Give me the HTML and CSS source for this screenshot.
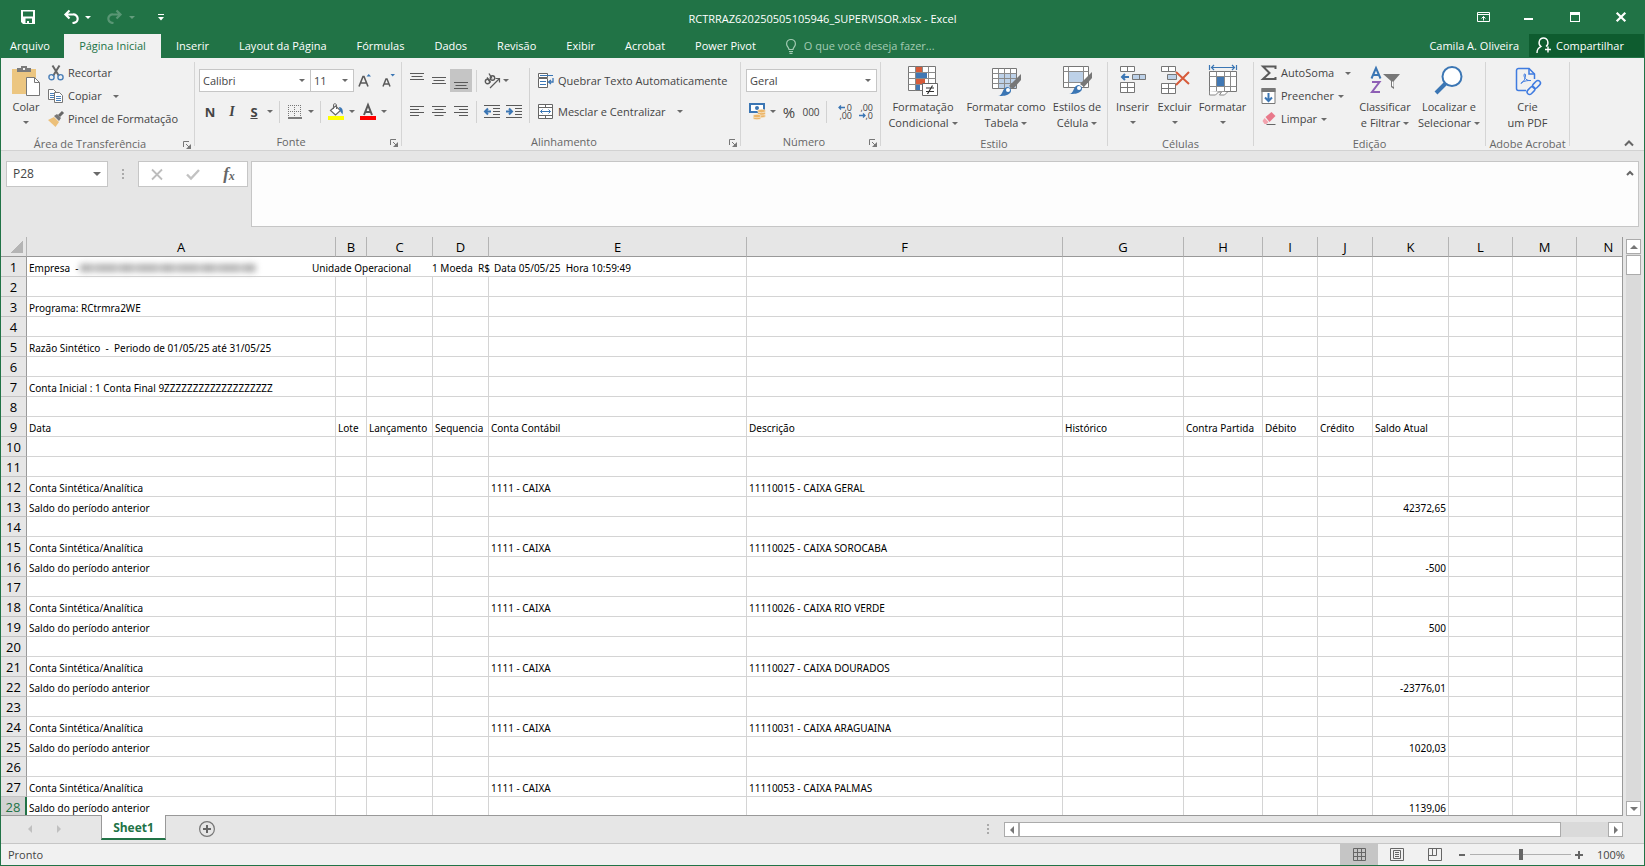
FILE: index.html
```html
<!DOCTYPE html>
<html lang="pt-BR">
<head>
<meta charset="utf-8">
<title>RCTRRAZ620250505105946_SUPERVISOR.xlsx - Excel</title>
<link rel="stylesheet" href="styles.css">
</head>
<body>
<header class="titlebar">
  <div class="quick">
    <button class="q-btn" aria-label="Salvar"><svg width="14" height="14" viewBox="0 0 14 14"><path d="M0 0h14v14H2L0 12zM2 1.500v5h10v-5zM3 8.500V13h1.500V8.500zM4.500 8.500H3V13h3v-2h2v2h3V8.500z" fill="#fff" fill-rule="evenodd"/></svg></button>
    <button class="q-btn" aria-label="Desfazer"><svg width="15" height="14" viewBox="0 0 15 14"><path d="M1 4.500h8a4 4 0 0 1 1 8.300L8.500 13M5.500 0.500L1.500 4.500l4 4" fill="none" stroke="#fff" stroke-width="2.200"/></svg></button>
    <i class="caret white"></i>
    <button class="q-btn redo" aria-label="Refazer"><svg width="15" height="14" viewBox="0 0 15 14"><path d="M14 4.500H6a4 4 0 0 0-1 8.300L6.500 13M9.500 0.500l4 4-4 4" fill="none" stroke="#fff" stroke-width="2.200"/></svg></button>
    <i class="caret white dim"></i>
    <button class="q-btn custom" aria-label="Personalizar"><svg width="6" height="7" viewBox="0 0 6 7"><path d="M0 0h6v1H0zM0 3h6L3 6.500z" fill="#fff"/></svg></button>
  </div>
  <h1 class="doc-title">RCTRRAZ620250505105946_SUPERVISOR.xlsx - Excel</h1>
  <div class="win">
    <button aria-label="Opções da faixa"><svg width="13" height="10" viewBox="0 0 13 10"><path d="M.5.500h12v9H.5zM1 2.500h11M6.500 8.500V4.500M4.500 6.500l2-2 2 2" fill="none" stroke="#fff"/></svg></button>
    <button aria-label="Minimizar"><svg width="10" height="10" viewBox="0 0 10 10"><path d="M0 6h9v2H0z" fill="#fff"/></svg></button>
    <button aria-label="Maximizar"><svg width="10" height="10" viewBox="0 0 10 10"><path d="M0 0h10v10H0zM1 3v6h8V3z" fill="#fff" fill-rule="evenodd"/></svg></button>
    <button aria-label="Fechar"><svg width="10" height="10" viewBox="0 0 10 10"><path d="M.7.700l8.600 8.600M9.300.700L.7 9.300" stroke="#fff" stroke-width="2.200"/></svg></button>
  </div>
</header>
<nav class="tabs">
  <button class="tab file">Arquivo</button>
  <button class="tab active">Página Inicial</button>
  <button class="tab">Inserir</button>
  <button class="tab">Layout da Página</button>
  <button class="tab">Fórmulas</button>
  <button class="tab">Dados</button>
  <button class="tab">Revisão</button>
  <button class="tab">Exibir</button>
  <button class="tab">Acrobat</button>
  <button class="tab">Power Pivot</button>
  <button class="tab tell"><svg width="10" height="15" viewBox="0 0 10 15"><path d="M3 10.500C3 8.500.6 7.500.6 4.900a4.400 4.400 0 0 1 8.800 0C9.400 7.500 7 8.500 7 10.500zM3 12.500h4M3.500 14.400h3" fill="none" stroke="#a3cbb3" stroke-width="1.200"/></svg>O que você deseja fazer...</button>
  <span class="user">Camila A. Oliveira</span>
  <button class="share"><svg width="16" height="17" viewBox="0 0 16 17"><path d="M1 16c0-4 1.500-5 4-6.500C1.500 7 3 1 7.500 1s6 6 2.500 8.500M9 12.500h6M12 9.500v6" fill="none" stroke="#fff" stroke-width="1.400"/></svg>Compartilhar</button>
</nav>

<section class="ribbon">
  <div class="group g-clip">
    <div class="g-body">
      <button class="big paste"><svg width="32" height="32" viewBox="0 0 32 32"><path d="M2 4h24v25H2z" fill="#ecc681"/><path d="M7 7V3h4V1h6v2h4v4z" fill="#7b7b7b"/><path d="M13 3h2v2h-2z" fill="#f1f1f1"/><path d="M16.500 12.500h8l5 5v13h-13z" fill="#fff" stroke="#777"/><path d="M24.500 12.500v5h5" fill="none" stroke="#777"/></svg><span>Colar</span><i class="caret"></i></button>
      <div class="stack">
        <button class="small"><svg width="16" height="16" viewBox="0 0 16 16"><path d="M4.500.500L11 11M11.500.500L5 11" stroke="#666" stroke-width="2"/><circle cx="3.500" cy="12.200" r="2.600" fill="none" stroke="#4a7fb8" stroke-width="1.400"/><circle cx="12.500" cy="12.200" r="2.600" fill="none" stroke="#4a7fb8" stroke-width="1.400"/></svg>Recortar</button>
        <button class="small"><svg width="16" height="16" viewBox="0 0 16 16"><path d="M.5 1.500h5l3 3v7h-8z" fill="#fff" stroke="#777"/><path d="M2 5.500h4M2 7.500h4M2 9.500h4" stroke="#4a7fb8"/><path d="M6.500 4.500h5l3 3v7h-8z" fill="#fff" stroke="#777"/><path d="M8 8.500h5M8 10.500h5M8 12.500h5" stroke="#4a7fb8"/></svg>Copiar<i class="caret far"></i></button>
        <button class="small"><svg width="16" height="16" viewBox="0 0 16 16"><path d="M0 9l6-3 5 5-3.500 5z" fill="#ecc07a"/><path d="M6 5l3-2 4 4-2 3z" fill="#777"/><path d="M11 5l4-4" stroke="#666" stroke-width="3"/></svg>Pincel de Formatação</button>
      </div>
    </div>
    <div class="g-label">Área de Transferência<button class="launch" aria-label="Mais opções"><svg width="8" height="8" viewBox="0 0 8 8"><path d="M.5 6V.500H6M3 3l3 3" fill="none" stroke="#777"/><path d="M8 3v5H3z" fill="#777"/></svg></button></div>
  </div>

  <div class="group g-font">
    <div class="g-body rows">
      <div class="row">
        <label class="combo font-name"><select aria-label="Fonte"><option>Calibri</option></select><i class="caret"></i></label>
        <label class="combo font-size"><select aria-label="Tamanho"><option>11</option></select><i class="caret"></i></label>
        <button class="ic grow" aria-label="Aumentar fonte"><svg width="15" height="16" viewBox="0 0 15 16"><path d="M1 13.500L5 3.500h1l4 10M2.500 10h6" fill="none" stroke="#5a5a5a" stroke-width="1.600"/><path d="M8.500 3.500h4.500L10.700 1z" fill="#3b76b4"/></svg></button>
        <button class="ic grow" aria-label="Diminuir fonte"><svg width="15" height="16" viewBox="0 0 15 16"><path d="M2 13.500L5 6h1l3 7.500M3 11h5" fill="none" stroke="#5a5a5a" stroke-width="1.500"/><path d="M9.500 1h4.500l-2.300 2.500z" fill="#3b76b4"/></svg></button>
      </div>
      <div class="row">
        <button class="ic letter bold">N</button>
        <button class="ic letter ital">I</button>
        <button class="ic letter under">S</button><i class="caret"></i>
        <i class="sep"></i>
        <button class="ic" aria-label="Bordas"><svg width="14" height="14" viewBox="0 0 14 14"><path d="M0 .5h14M0 6.500h14M.5 0v12M6.500 0v12M12.500 0v12" stroke="#777" stroke-dasharray="1 1" fill="none"/><path d="M0 13h14" stroke="#555" stroke-width="1.500"/></svg></button><i class="caret"></i>
        <i class="sep"></i>
        <button class="ic" aria-label="Cor de preenchimento"><svg width="16" height="17" viewBox="0 0 16 17"><path d="M2.500 7.500L7.500 3l5 4.500-5 4.500z" fill="#fff" stroke="#666" stroke-width="1.200"/><path d="M5.500 6V1.500C5.500.500 8.500.500 8.500 2v4" fill="none" stroke="#666"/><path d="M11 4c3 0 4.500 3 3.500 7.500L12 8z" fill="#3b76b4"/><path d="M0 13h16v4H0z" fill="#ffff00"/></svg></button><i class="caret"></i>
        <button class="ic" aria-label="Cor da fonte"><svg width="16" height="17" viewBox="0 0 16 17"><path d="M4 12L8 2l4 10M5.500 9h5" fill="none" stroke="#5a5a5a" stroke-width="2"/><path d="M0 13h16v4H0z" fill="#f00"/></svg></button><i class="caret"></i>
      </div>
    </div>
    <div class="g-label">Fonte<button class="launch" aria-label="Mais opções"><svg width="8" height="8" viewBox="0 0 8 8"><path d="M.5 6V.500H6M3 3l3 3" fill="none" stroke="#777"/><path d="M8 3v5H3z" fill="#777"/></svg></button></div>
  </div>

  <div class="group g-align">
    <div class="g-body">
      <div class="rows">
        <div class="row">
          <button class="ic" aria-label="Em cima"><svg width="14" height="24" viewBox="0 0 14 24"><path d="M0 4.500h14M1.500 7.500h11M0 10.500h14" stroke="#5a5a5a"/></svg></button>
          <button class="ic" aria-label="No meio"><svg width="14" height="24" viewBox="0 0 14 24"><path d="M0 8.500h14M1.500 11.500h11M0 14.500h14" stroke="#5a5a5a"/></svg></button>
          <button class="ic on" aria-label="Embaixo"><svg width="14" height="24" viewBox="0 0 14 24"><path d="M0 13.500h14M1.500 16.500h11M0 19.500h14" stroke="#5a5a5a"/></svg></button>
          <i class="sep"></i>
          <button class="ic" aria-label="Orientação"><svg width="17" height="16" viewBox="0 0 17 16"><g fill="none" stroke="#5a5a5a" stroke-width="1.400"><circle cx="3.500" cy="8.500" r="2.200"/><path d="M3 4.500l3.500 5"/><circle cx="8.500" cy="5" r="2.200"/><path d="M5 .500l3 5"/><path d="M6 15L15.500 5.500M11.500 5.500h4v4" stroke-width="1.200"/></g></svg></button><i class="caret"></i>
        </div>
        <div class="row">
          <button class="ic" aria-label="Esquerda"><svg width="14" height="12" viewBox="0 0 14 12"><path d="M0 .5h14M0 3.500h9M0 6.500h14M0 9.500h9" stroke="#5a5a5a"/></svg></button>
          <button class="ic" aria-label="Centro"><svg width="14" height="12" viewBox="0 0 14 12"><path d="M0 .5h14M2.500 3.500h9M0 6.500h14M2.500 9.500h9" stroke="#5a5a5a"/></svg></button>
          <button class="ic" aria-label="Direita"><svg width="14" height="12" viewBox="0 0 14 12"><path d="M0 .5h14M5 3.500h9M0 6.500h14M5 9.500h9" stroke="#5a5a5a"/></svg></button>
          <i class="sep"></i>
          <button class="ic" aria-label="Diminuir recuo"><svg width="16" height="13" viewBox="0 0 16 13"><path d="M0 .5h16M9 3.500h7M9 6.500h7M9 9.500h7M0 12.500h16" stroke="#5a5a5a"/><path d="M1 6.500h6M4 3.500l-3 3 3 3" fill="none" stroke="#3b76b4" stroke-width="2"/></svg></button>
          <button class="ic" aria-label="Aumentar recuo"><svg width="16" height="13" viewBox="0 0 16 13"><path d="M0 .5h16M9 3.500h7M9 6.500h7M9 9.500h7M0 12.500h16" stroke="#5a5a5a"/><path d="M0 6.500h6M3 3.500l3 3-3 3" fill="none" stroke="#3b76b4" stroke-width="2"/></svg></button>
        </div>
      </div>
      <i class="sep tall"></i>
      <div class="rows wide">
        <div class="row"><button class="small"><svg width="16" height="16" viewBox="0 0 16 16"><path d="M.5.500h9v4h-9zM.5 5.500h9v9h-9z" fill="#fff" stroke="#666"/><path d="M2 2.500h13M2 8.500h6M2 11.500h6" stroke="#3b76b4"/><path d="M15 5v4h-4M13 7l-2.500 2 2.500 2" fill="none" stroke="#3b76b4" stroke-width="1.300"/></svg>Quebrar Texto Automaticamente</button></div>
        <div class="row"><button class="small"><svg width="16" height="16" viewBox="0 0 16 16"><path d="M.5.500h14v14H.5zM.5 3.500h14M.5 11.500h14M7.500.500v3M7.500 11.500v3" fill="#fff" stroke="#666"/><path d="M2.500 7.500h10M4.500 5.500l-2 2 2 2M10.500 5.500l2 2-2 2" fill="none" stroke="#3b76b4"/></svg>Mesclar e Centralizar<i class="caret far"></i></button></div>
      </div>
    </div>
    <div class="g-label">Alinhamento<button class="launch" aria-label="Mais opções"><svg width="8" height="8" viewBox="0 0 8 8"><path d="M.5 6V.500H6M3 3l3 3" fill="none" stroke="#777"/><path d="M8 3v5H3z" fill="#777"/></svg></button></div>
  </div>

  <div class="group g-num">
    <div class="g-body rows">
      <div class="row"><label class="combo number"><select aria-label="Formato de número"><option>Geral</option></select><i class="caret"></i></label></div>
      <div class="row">
        <button class="ic" aria-label="Formato de contabilização"><svg width="17" height="17" viewBox="0 0 17 17"><path d="M1 1h14v8H1z" fill="#fff" stroke="#3b76b4" stroke-width="2"/><circle cx="8" cy="5" r="2" fill="#3b76b4"/><g fill="#ecb567" stroke="#f6f0e4" stroke-width=".6"><ellipse cx="12.500" cy="13" rx="4" ry="1.700"/><ellipse cx="12.500" cy="10.500" rx="4" ry="1.700"/><ellipse cx="12.500" cy="8" rx="4" ry="1.700"/><ellipse cx="8" cy="15" rx="4" ry="1.700"/><ellipse cx="8" cy="13" rx="4" ry="1.700"/></g></svg></button><i class="caret"></i>
        <button class="ic pct">%</button>
        <button class="ic thou">000</button>
        <i class="sep"></i>
        <button class="ic dec"><span><svg width="7" height="5" viewBox="0 0 7 5"><path d="M1 2.500h6M3 .5l-2 2 2 2" fill="none" stroke="#3b76b4" stroke-width="1.300"/></svg>,0</span><span>,00</span></button>
        <button class="ic dec"><span>,00</span><span><svg width="7" height="5" viewBox="0 0 7 5"><path d="M0 2.500h6M4 .5l2 2-2 2" fill="none" stroke="#3b76b4" stroke-width="1.300"/></svg>,0</span></button>
      </div>
    </div>
    <div class="g-label">Número<button class="launch" aria-label="Mais opções"><svg width="8" height="8" viewBox="0 0 8 8"><path d="M.5 6V.500H6M3 3l3 3" fill="none" stroke="#777"/><path d="M8 3v5H3z" fill="#777"/></svg></button></div>
  </div>

  <div class="group g-style">
    <div class="g-body">
      <button class="big"><svg width="32" height="32" viewBox="0 0 32 32"><path d="M1.500 1.500h27v24h-27z" fill="#fff" stroke="#777"/><path d="M8.500 1.500v24M15.500 1.500v24M21.500 1.500v24M1.500 7.500h27M1.500 13.500h27M1.500 19.500h27" stroke="#8a8a8a"/><path d="M9 2h6v5H9zM9 14h9v5H9z" fill="#d75b3a"/><path d="M9 8h11v5H9zM9 20h4v5H9z" fill="#4178b4"/><path d="M15.500 18.500h15v12h-15z" fill="#fff" stroke="#666"/><path d="M19 23h8M19 26.500h8M25.500 20.500l-5 8.500" stroke="#333" stroke-width="1.200"/></svg><span>Formatação</span><span>Condicional<i class="caret"></i></span></button>
      <button class="big"><svg width="32" height="32" viewBox="0 0 32 32"><path d="M2.500 3.500h24v20h-24z" fill="#fff" stroke="#777"/><path d="M9 9h17v14H9z" fill="#bdd1e8"/><path d="M8.500 3.500v20M14.500 3.500v20M20.500 3.500v20M2.500 8.500h24M2.500 13.500h24M2.500 18.500h24" stroke="#8a8a8a"/><path d="M31 9v6l-8 9-4-3z" fill="#777"/><path d="M8 31c5 0 4-8 9-9 4 0 5 4 3 6-3 3-7 3-12 3z" fill="#3b76b4"/><circle cx="18" cy="25" r="2" fill="#fff"/></svg><span>Formatar como</span><span>Tabela<i class="caret"></i></span></button>
      <button class="big"><svg width="32" height="32" viewBox="0 0 32 32"><path d="M2.500 1.500h25v21h-25z" fill="#fff" stroke="#777"/><path d="M7.500 1.500v21M22.500 1.500v21M2.500 6.500h25M2.500 17.500h25" stroke="#8a8a8a"/><path d="M8 7h14v10H8z" fill="#bdd1e8"/><path d="M31 7v6l-8 9-4-3z" fill="#777"/><path d="M8 29c5 0 4-8 9-9 4 0 5 4 3 6-3 3-7 3-12 3z" fill="#3b76b4"/><circle cx="18" cy="23" r="2" fill="#fff"/></svg><span>Estilos de</span><span>Célula<i class="caret"></i></span></button>
    </div>
    <div class="g-label">Estilo</div>
  </div>

  <div class="group g-cells">
    <div class="g-body">
      <button class="big"><svg width="30" height="32" viewBox="0 0 30 32"><path d="M2.500 1.500h14v5h-14zM9.500 1.500v5M2.500 17.500h14v10h-14zM9.500 17.500v10M2.500 22.500h14" fill="#fff" stroke="#777"/><path d="M14.500 9.500h13v5h-13zM21.500 9.500v5" fill="#bdd1e8" stroke="#777"/><path d="M4 12h7M7 9l-3 3 3 3" fill="none" stroke="#3b76b4" stroke-width="2"/></svg><span>Inserir</span><i class="caret"></i></button>
      <button class="big"><svg width="32" height="32" viewBox="0 0 32 32"><path d="M2.500 1.500h14v5h-14zM9.500 1.500v5M2.500 18.500h14v10h-14zM9.500 18.500v10M2.500 23.500h14" fill="#fff" stroke="#777"/><path d="M8.500 9.500h9v5h-9z" fill="#bdd1e8" stroke="#777"/><path d="M17 7l13 12M30 7L17 20" stroke="#d75b3a" stroke-width="2"/></svg><span>Excluir</span><i class="caret"></i></button>
      <button class="big"><svg width="30" height="32" viewBox="0 0 30 32"><path d="M1.500 0v5M28.500 0v5M3 2.500h24M6 0L3.500 2.500 6 5M24 0l2.500 2.500L24 5" fill="none" stroke="#3b76b4" stroke-width="1.200"/><path d="M1.500 6.500h27v20h-27z" fill="#fff" stroke="#777"/><path d="M8.500 6.500v20M16.500 6.500v20M22.500 6.500v20M1.500 11.500h27M1.500 21.500h27" stroke="#8a8a8a"/><path d="M9 12h7v9H9z" fill="#4178b4"/><path d="M1.500 26v4h6l3-3h3l-2 3h5l3-3" fill="#fff" stroke="#888"/></svg><span>Formatar</span><i class="caret"></i></button>
    </div>
    <div class="g-label">Células</div>
  </div>

  <div class="group g-edit">
    <div class="g-body">
      <div class="stack">
        <button class="small"><svg width="15" height="16" viewBox="0 0 15 16"><path d="M14 4V1.500H1.500L8 8l-6.500 6H14V12" fill="none" stroke="#5a5a5a" stroke-width="2"/></svg>AutoSoma<i class="caret far"></i></button>
        <button class="small"><svg width="15" height="16" viewBox="0 0 15 16"><path d="M.5.500h13v15H.5z" fill="#fff" stroke="#777"/><path d="M0 0h14v4H0z" fill="#777"/><path d="M7 5v8M3.500 9.500L7 13l3.500-3.500" fill="none" stroke="#3b76b4" stroke-width="2"/></svg>Preencher<i class="caret"></i></button>
        <button class="small"><svg width="15" height="16" viewBox="0 0 15 16"><path d="M4 6l6-5 4 4-6 6z" fill="#e8788a"/><path d="M3 7l4 4-2 2H3l-2-3z" fill="#f3a3ae"/><path d="M5 13.500h9" stroke="#666"/></svg>Limpar<i class="caret"></i></button>
      </div>
      <button class="big"><svg width="32" height="32" viewBox="0 0 32 32"><path d="M2.500 13.500L7 3l4.500 10.500M4 10h6" fill="none" stroke="#3b76b4" stroke-width="2"/><path d="M3 17h7.500L3 27h8" fill="none" stroke="#8e5fb5" stroke-width="2"/><path d="M14 9h17l-6 7v8l-3-2v-6z" fill="#777"/><path d="M23 16.500h1.500V22L23 21z" fill="#fff"/></svg><span>Classificar</span><span>e Filtrar<i class="caret"></i></span></button>
      <button class="big"><svg width="32" height="32" viewBox="0 0 32 32"><path d="M3 28l11-11" stroke="#3b76b4" stroke-width="4"/><circle cx="19" cy="11.500" r="9.500" fill="#fff" stroke="#3b76b4" stroke-width="2"/></svg><span>Localizar e</span><span>Selecionar<i class="caret"></i></span></button>
    </div>
    <div class="g-label">Edição</div>
  </div>

  <div class="group g-pdf">
    <div class="g-body">
      <button class="big"><svg width="28" height="32" viewBox="0 0 28 32"><g fill="none" stroke="#3f7be0" stroke-width="1.500"><path d="M13 25.500H5.500a2 2 0 0 1-2-2v-18a2 2 0 0 1 2-2H16l5.500 5.500v5"/><path d="M16 3.500V9h5.500"/><path d="M8 18.500c3-2 4.500-5 4.500-8.500 0-1.500-1.500-1.500-1.500 0 0 3.500 3 6 7 5.500M8 18.500c-.5-1 4-3 9-3" stroke-width="1"/><rect x="-2.500" y="-4.500" width="5" height="9" rx="2.500" transform="translate(23.500 19.500) rotate(45)"/><rect x="-2.500" y="-4.500" width="5" height="9" rx="2.500" transform="translate(18 25.500) rotate(45)"/></g></svg><span>Crie</span><span>um PDF</span></button>
    </div>
    <div class="g-label">Adobe Acrobat</div>
  </div>
  <button class="collapse" aria-label="Recolher faixa"><svg width="10" height="7" viewBox="0 0 10 7"><path d="M1 5.500l4-4 4 4" fill="none" stroke="#666" stroke-width="2"/></svg></button>
</section>

<section class="formula">
  <label class="namebox"><input aria-label="Caixa de nome" value="P28"><i class="caret"></i></label>
  <i class="dots"></i>
  <div class="fx-box">
    <button aria-label="Cancelar"><svg width="12" height="11" viewBox="0 0 12 11"><path d="M1 .5l10 10M11 .5l-10 10" stroke="#bdbdbd" stroke-width="1.800"/></svg></button>
    <button aria-label="Inserir"><svg width="14" height="11" viewBox="0 0 14 11"><path d="M1 5.500l4 4L13 1" fill="none" stroke="#c2c2c2" stroke-width="2.400"/></svg></button>
    <button class="fx" aria-label="Inserir função">f<small>x</small></button>
  </div>
  <div class="entry"><textarea aria-label="Barra de fórmulas"></textarea><button aria-label="Recolher barra"><svg width="8" height="6" viewBox="0 0 8 6"><path d="M1 5l3-3 3 3" fill="none" stroke="#666" stroke-width="2"/></svg></button></div>
</section>

<main class="workspace">
  <div class="sheet"><table class="grid"><colgroup id="cols"></colgroup><thead><tr id="heads"></tr></thead><tbody id="body"></tbody></table></div>
  <div class="vscroll"><button aria-label="Para cima"><i class="tri up"></i></button><div class="vthumb"></div><div class="track"></div><button aria-label="Para baixo"><i class="tri down"></i></button></div>
</main>

<footer class="sheetbar">
  <div class="nav"><i class="tri left"></i><i class="tri right"></i></div>
  <button class="sheet-tab">Sheet1</button>
  <button class="add" aria-label="Nova planilha"><svg width="16" height="16" viewBox="0 0 16 16"><circle cx="8" cy="8" r="7.400" fill="none" stroke="#777" stroke-width="1.200"/><path d="M4 8h8M8 4v8" stroke="#666" stroke-width="2"/></svg></button>
  <i class="dots"></i>
  <div class="hscroll"><button aria-label="Para a esquerda"><i class="tri left"></i></button><div class="hthumb"></div><div class="track"></div><button aria-label="Para a direita"><i class="tri right"></i></button></div>
</footer>
<footer class="status">
  <span class="ready">Pronto</span>
  <button class="view on" aria-label="Normal"><svg width="13" height="13" viewBox="0 0 13 13"><path d="M.5.500h12v12H.5zM4.500.500v12M8.500.500v12M.5 4.500h12M.5 8.500h12" fill="none" stroke="#666"/></svg></button>
  <button class="view" aria-label="Layout da página"><svg width="14" height="13" viewBox="0 0 14 13"><path d="M.5.500h13v12H.5zM3.500 2.500h7v8h-7zM5 4.500h4M5 6.500h4M5 8.500h4" fill="none" stroke="#666"/></svg></button>
  <button class="view" aria-label="Quebra de página"><svg width="14" height="13" viewBox="0 0 14 13"><path d="M.5.500h13v12H.5zM.5 7.500h8v-7M4.500.500v7" fill="none" stroke="#666"/></svg></button>
  <button class="zoom" aria-label="Menos zoom"><svg width="8" height="8" viewBox="0 0 8 8"><path d="M1 3h6v2H1z" fill="#666"/></svg></button>
  <input class="slider" type="range" min="0" max="100" value="50" aria-label="Zoom">
  <button class="zoom" aria-label="Mais zoom"><svg width="8" height="8" viewBox="0 0 8 8"><path d="M0 4h8M4 0v8" stroke="#666" stroke-width="2"/></svg></button>
  <span class="pctz">100%</span>
</footer>
<script src="sheet.js"></script>
</body>
</html>
```
FILE: styles.css
```css
* { box-sizing: border-box; }
body {
  margin: 0;
  height: 100vh;
  display: flex;
  flex-direction: column;
  overflow: hidden;
  background: #e6e6e6;
  border: 1px solid #217346;
  border-top: 0;
  font: 11px/16px "Open Sans", "Noto Sans", sans-serif;
  color: #444;
}
button, select, input, textarea {
  font: inherit;
  color: inherit;
  background: none;
  border: 0;
  padding: 0;
  margin: 0;
  border-radius: 0;
  outline: 0;
}
button { display: flex; align-items: center; justify-content: center; white-space: nowrap; }
svg { display: block; flex: none; overflow: visible; }

.caret { flex: none; display: inline-block; border: 3px solid transparent; border-top-color: #6a6a6a; border-bottom: 0; }
.caret.white { border-top-color: #fff; }
.caret.dim { opacity: .3; }

/* title bar */
.titlebar { flex: none; height: 34px; display: grid; grid-template-columns: 1fr auto 1fr; align-items: center; background: #217346; color: #fff; }
.quick { display: flex; align-items: center; padding-left: 16px; height: 32px; }
.q-btn { width: 22px; height: 22px; }
.quick .q-btn:nth-child(2) { margin: 0 3px 0 21px; }
.quick .redo { margin: 0 4px 0 12px; opacity: .25; }
.quick .custom { margin-left: 15px; }
.doc-title { margin: 0; padding-top: 4px; font-size: 11px; font-weight: 400; }
.win { display: flex; justify-content: flex-end; height: 32px; }
.win button { width: 46px; }

/* tabs */
.tabs { flex: none; height: 24px; display: flex; background: #217346; color: #fff; }
.tab { padding: 0 15px; }
.tab.file { width: 63px; justify-content: flex-start; padding: 0 0 0 9px; }
.tab.active { background: #f1f1f1; color: #217346; width: 97px; padding: 0; }
.tab.tell { gap: 8px; color: #a3cbb3; }
.user { margin-left: auto; padding: 4px 10px; }
.share { background: #0e5c2f; width: 115px; height: 23px; gap: 4px; justify-content: flex-start; padding-left: 7px; }

/* ribbon */
.ribbon { flex: none; height: 93px; display: flex; background: #f1f1f1; border-bottom: 1px solid #d2d2d2; padding-top: 4px; }
.group { flex: none; display: flex; flex-direction: column; border-right: 1px solid #d5d5d5; height: 84px; }
.g-body { flex: 1; display: flex; align-items: flex-start; }
.g-label { position: relative; height: 16px; margin-bottom: -4px; text-align: center; white-space: nowrap; color: #666; }
.g-clip { width: 194px; padding-left: 3px; }
.g-font { width: 207px; padding-left: 4px; }
.g-align { width: 339px; padding-left: 4px; }
.g-num { width: 140px; padding-left: 5px; }
.g-style { width: 227px; }
.g-cells { width: 146px; }
.g-edit { width: 232px; }
.g-pdf { width: 84px; }
.g-clip .g-label, .g-font .g-label, .g-num .g-label, .g-align .g-label { padding-right: 18px; }
.launch { position: absolute; right: 3px; top: 5px; }

.big { flex-direction: column; justify-content: flex-start; padding-top: 3px; height: 74px; }
.big svg { margin-bottom: 2px; }
.big span { display: flex; align-items: center; gap: 3px; }
.big > .caret { margin-top: 6px; }
.paste { width: 44px; }
.g-style .g-body, .g-cells .g-body, .g-pdf .g-body { justify-content: center; }
.g-style .big:nth-child(1) { width: 80px; }
.g-style .big:nth-child(2) { width: 86px; }
.g-style .big:nth-child(3) { width: 56px; }
.g-cells .big { width: 42px; }
.g-cells .big:last-child { width: 54px; }
.g-edit .big { width: 62px; }
.g-edit .big:last-child { width: 66px; }

.stack { display: flex; flex-direction: column; }
.small { height: 23px; gap: 4px; justify-content: flex-start; }
.stack .small { padding-bottom: 1px; }
.stack .small svg { width: 16px; }
.small .far { margin-left: 7px; }
.g-edit .stack { width: 100px; padding-left: 7px; }

.rows { display: flex; flex-direction: column; align-items: stretch; gap: 8px; padding-top: 7px; }
.rows.g-body { justify-content: flex-start; }
.row { display: flex; align-items: center; height: 23px; }
.wide { padding-left: 8px; }
.ic { width: 22px; height: 23px; }
.on { background: #c5c5c5; }
.sep { flex: none; width: 1px; height: 22px; background: #d2d2d2; margin: 0 4px; }
.sep.tall { height: 55px; margin: 6px 0 0; }
.g-align .rows:first-child { width: 123px; }
.g-font .caret, .g-num .row .caret { margin: 0 2px; }
.letter { font-size: 13px; color: #444; }
.bold { font-weight: 700; }
.ital { font: italic 700 14px/16px "Liberation Serif", serif; }
.under { font-weight: 700; text-decoration: underline; }

.combo { position: relative; display: flex; align-items: center; height: 23px; background: #fff; border: 1px solid #c6c6c6; }
.combo select { appearance: none; width: 100%; height: 21px; padding-left: 3px; }
.combo .caret { position: absolute; right: 3px; }
.font-name { width: 112px; }
.font-size { width: 44px; margin-left: -1px; }
.number { width: 131px; }
.grow { width: 23px; }
.pct { font-size: 15px; }
.thou { font-size: 10px; }
.dec { flex-direction: column; font-size: 9px; line-height: 8px; align-items: flex-end; justify-content: center; width: 21px; }
.dec span { display: flex; align-items: center; }
.collapse { margin: 76px 10px 0 auto; height: 10px; }

/* formula bar */
.formula { flex: none; display: flex; align-items: flex-start; padding: 10px 5px 0; height: 77px; }
.namebox { display: flex; align-items: center; width: 102px; height: 26px; background: #fff; border: 1px solid #c6c6c6; padding: 0 6px; font-size: 12px; }
.namebox input { width: 100%; min-width: 0; }
.namebox .caret { border-width: 4px 4px 0; }
.dots { flex: none; width: 2px; height: 11px; margin: 8px 14px 0; background: repeating-linear-gradient(#aaa 0 2px, transparent 2px 4px); }
.fx-box { display: flex; width: 110px; height: 26px; background: #fff; border: 1px solid #c6c6c6; }
.fx-box button { flex: 1; }
.fx { font: italic 700 17px/16px "Liberation Serif", serif; color: #666; }
.fx small { font-size: 12px; padding-top: 4px; }
.entry { flex: 1; display: flex; align-items: flex-start; margin-left: 3px; height: 66px; background: #fdfdfd; border: 1px solid #c6c6c6; }
.entry textarea { flex: 1; height: 100%; resize: none; }
.entry button { padding: 8px 4px; }

/* grid */
.workspace { flex: 1; min-height: 0; display: flex; padding: 9px 3px 0 0; }
.sheet { flex: 1; min-width: 0; overflow: hidden; border-right: 1px solid #999; border-bottom: 1px solid #999; }
.grid { border-collapse: separate; border-spacing: 0; table-layout: fixed; width: 1640px; font: 10px/16px "Noto Sans", sans-serif; color: #000; background: #fff; }
.grid th { padding: 1px 0 0; background: #e6e6e6; font: 400 13px/18px "Open Sans", sans-serif; text-align: center; border-right: 1px solid #999; border-bottom: 1px solid #c2c2c2; }
.grid thead th { height: 20px; border-bottom-color: #999; border-right-color: #b4b4b4; }
.grid td { height: 20px; padding: 3px 2px 0; white-space: nowrap; border-right: 1px solid #d4d4d4; border-bottom: 1px solid #d4d4d4; }
.grid td.num { text-align: right; }
.grid th.sel { background: #d2d2d2; color: #217346; border-right: 2px solid #217346; }
.corner i { display: block; margin: 3px 3px 3px auto; width: 12px; height: 12px; background: linear-gradient(135deg, transparent 50%, #b4b4b4 50%); }
.company { display: grid; grid-template-columns: 51px 232px 120px 62px auto; }
.smudge { width: 176px; height: 8px; margin: 4px 0 0; filter: blur(3px); background: repeating-linear-gradient(90deg, #999 0 11px, #b4b4b4 11px 17px, #9f9f9f 17px 36px, #b8b8b8 36px 41px); opacity: .8; }

/* scroll bars */
.vscroll { flex: none; display: flex; flex-direction: column; width: 15px; margin: 2px 0 0 3px; background: #dadada; }
.vscroll button, .hscroll button { flex: none; width: 15px; height: 15px; background: #fff; border: 1px solid #ababab; }
.vthumb { height: 20px; margin-top: 1px; background: #fff; border: 1px solid #ababab; }
.track { flex: 1; background: #dadada; }
.tri { border: 4px solid transparent; }
.tri.up { border-bottom-color: #777; border-top: 0; }
.tri.down { border-top-color: #777; border-bottom: 0; }
.tri.left { border-right-color: #777; border-left: 0; }
.tri.right { border-left-color: #777; border-right: 0; }

.sheetbar { flex: none; height: 27px; display: flex; align-items: flex-start; padding-right: 21px; }
.nav { display: flex; gap: 25px; width: 100px; padding: 9px 0 0 27px; }
.nav .left { border-right-color: #c0c0c0; }
.nav .right { border-left-color: #c0c0c0; }
.sheet-tab { width: 65px; height: 25px; margin-top: -1px; padding-top: 2px; position: relative; background: #fff; color: #217346; font-weight: 700; font-size: 12px; border: solid #999; border-width: 0 1px; border-bottom: 2px solid #217346; }
.add { margin: 5px 0 0 33px; }
.sheetbar .dots { margin: 8px 15px 0 auto; }
.hscroll { display: flex; width: 619px; height: 15px; margin-top: 6px; }
.hthumb { flex: none; width: 87.5%; background: #fff; border: 1px solid #ababab; }

.status { flex: none; height: 22px; display: flex; align-items: center; background: #f1f1f1; border-top: 1px solid #c6c6c6; }
.ready { margin-right: auto; padding-left: 7px; }
.view { width: 38px; height: 21px; }
.zoom { width: 10px; height: 21px; }
.zoom:nth-of-type(4) { margin-left: 3px; }
.slider { appearance: none; width: 101px; height: 11px; margin: 0 3px; background: linear-gradient(#b0b0b0, #b0b0b0) center / 100% 1px no-repeat; }
.slider::-webkit-slider-thumb { appearance: none; width: 4px; height: 11px; background: #666; border: 0; }
.pctz { width: 60px; padding-left: 13px; }
```
FILE: sheet.js
```javascript
const columns = [["A", 309], ["B", 31], ["C", 66], ["D", 56], ["E", 258], ["F", 316], ["G", 121],
  ["H", 79], ["I", 55], ["J", 55], ["K", 76], ["L", 64], ["M", 64], ["N", 64]];

const cells = {
  A3: "Programa: RCtrmra2WE",
  A5: "Razão Sintético&nbsp; -&nbsp; Periodo de 01/05/25 até 31/05/25",
  A7: "Conta Inicial : 1 Conta Final 9ZZZZZZZZZZZZZZZZZZZ",
  A9: "Data", B9: "Lote", C9: "Lançamento", D9: "Sequencia", E9: "Conta Contábil", F9: "Descrição",
  G9: "Histórico", H9: "Contra Partida", I9: "Débito", J9: "Crédito", K9: "Saldo Atual"
};

const accounts = [
  ["11110015 - CAIXA GERAL", "42372,65"],
  ["11110025 - CAIXA SOROCABA", "-500"],
  ["11110026 - CAIXA RIO VERDE", "500"],
  ["11110027 - CAIXA DOURADOS", "-23776,01"],
  ["11110031 - CAIXA ARAGUAINA", "1020,03"],
  ["11110053 - CAIXA PALMAS", "1139,06"]
];
accounts.forEach(([name, balance], i) => {
  const row = 12 + i * 3;
  cells["A" + row] = "Conta Sintética/Analítica";
  cells["E" + row] = "1111 - CAIXA";
  cells["F" + row] = name;
  cells["A" + (row + 1)] = "Saldo do período anterior";
  cells["K" + (row + 1)] = balance;
});

document.getElementById("cols").innerHTML =
  '<col style="width:26px">' + columns.map(([, w]) => `<col style="width:${w}px">`).join("");
document.getElementById("heads").innerHTML =
  '<th class="corner"><i></i></th>' + columns.map(([c]) => `<th>${c}</th>`).join("");

let html = "";
for (let r = 1; r <= 28; r++) {
  html += `<tr><th${r === 28 ? ' class="sel"' : ""}>${r}</th>`;
  columns.forEach(([c], i) => {
    if (r === 1 && i < 5) {
      if (i === 0) {
        html += '<td colspan="5"><div class="company"><span>Empresa&nbsp; -</span><span class="smudge"></span>' +
          "<span>Unidade Operacional</span><span>1 Moeda&nbsp; R$</span><span>Data 05/05/25&nbsp; Hora 10:59:49</span></div></td>";
      }
      return;
    }
    const numeric = c === "K" && r > 9 ? ' class="num"' : "";
    html += `<td${numeric}>${cells[c + r] || ""}</td>`;
  });
  html += "</tr>";
}
document.getElementById("body").innerHTML = html;
```
